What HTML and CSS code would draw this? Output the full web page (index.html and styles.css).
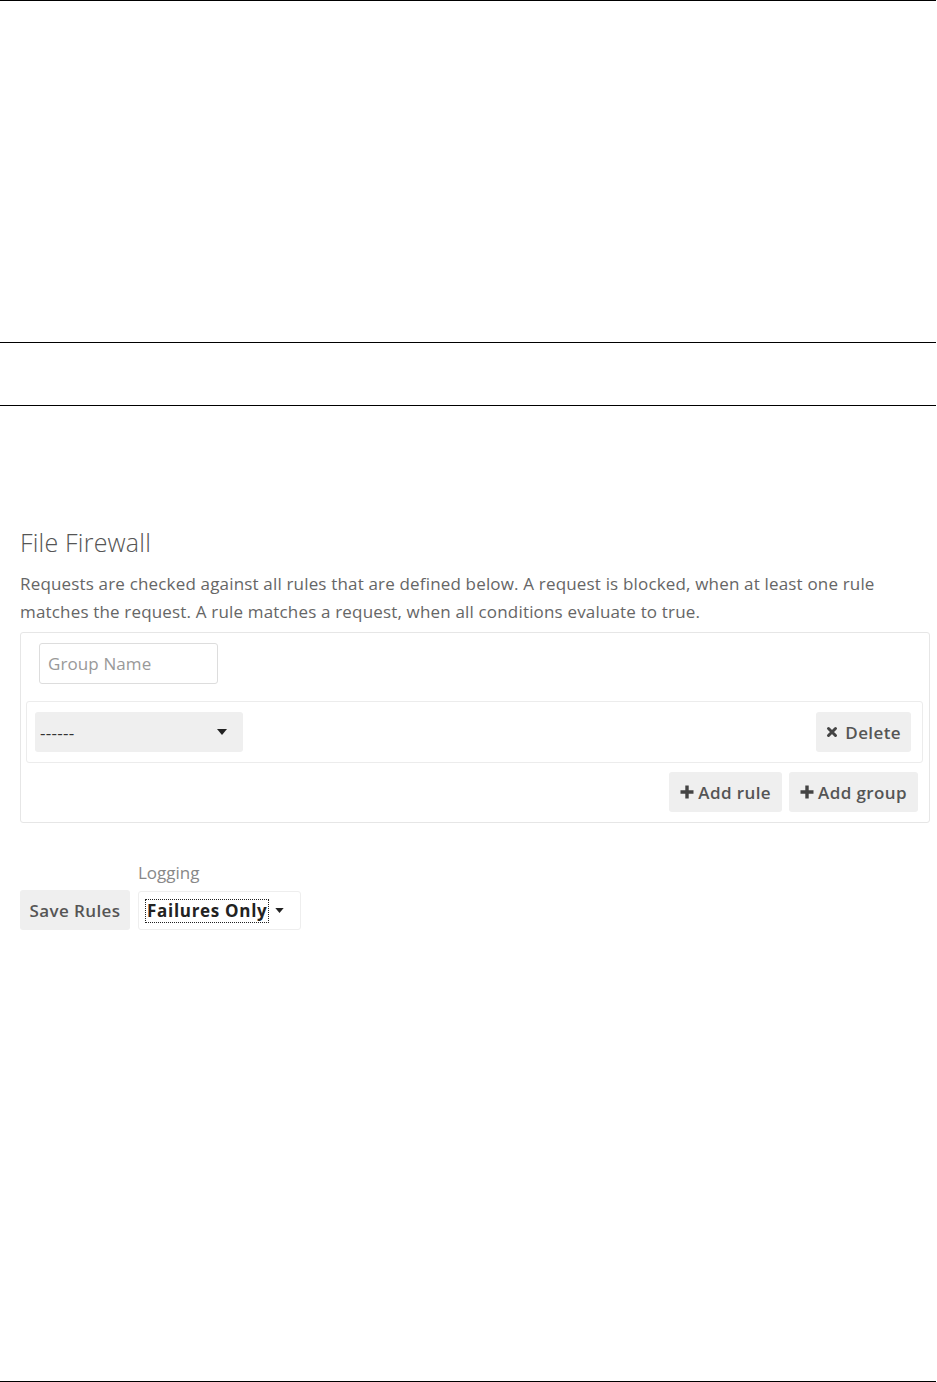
FILE: index.html
```html
<!DOCTYPE html>
<html>
<head>
<meta charset="utf-8">
<link rel="stylesheet" href="styles.css">
</head>
<body>
<div class="frame frame-a"></div>
<div class="frame frame-b"></div>
<div class="frame frame-c">
  <div class="section">
    <h2 class="title">File Firewall</h2>
    <p class="desc">Requests are checked against all rules that are defined below. A request is blocked, when at least one rule matches the request. A rule matches a request, when all conditions evaluate to true.</p>
    <div class="group">
      <input class="group-name" type="text" placeholder="Group Name">
      <div class="rule">
        <div class="select grey">
          <span class="sel-text">------</span>
          <svg class="caret" width="10" height="6" viewBox="0 0 10 6"><path d="M0 0H10L5 6Z" fill="#222"/></svg>
        </div>
        <button class="btn del">
          <svg class="ico" width="12" height="12" viewBox="0 0 12 12"><path d="M2.5 2.5L9.5 9.5M9.5 2.5L2.5 9.5" stroke="#444" stroke-width="3" stroke-linecap="round"/></svg>Delete</button>
      </div>
      <div class="actions">
        <button class="btn">
          <svg class="ico" width="14" height="14" viewBox="0 0 14 14"><path d="M7 0.5V13.5M0.5 7H13.5" stroke="#444" stroke-width="3.4"/></svg>Add rule</button>
        <button class="btn">
          <svg class="ico" width="14" height="14" viewBox="0 0 14 14"><path d="M7 0.5V13.5M0.5 7H13.5" stroke="#444" stroke-width="3.4"/></svg>Add group</button>
      </div>
    </div>
    <div class="footer">
      <button class="btn save">Save Rules</button>
      <div class="logging">
        <label class="log-label">Logging</label>
        <div class="select white">
          <span class="focus-text">Failures Only</span>
          <svg class="caret" width="9" height="5" viewBox="0 0 10 6"><path d="M0 0H10L5 6Z" fill="#222"/></svg>
        </div>
      </div>
    </div>
  </div>
</div>
<div class="frame frame-d"></div>
</body>
</html>
```
FILE: styles.css
```css
html, body {
  margin: 0;
  padding: 0;
  background: #fff;
  font-family: "Open Sans", "Liberation Sans", sans-serif;
  color: #555;
}
.frame {
  width: 936px;
  border-top: 1px solid #000;
  box-sizing: border-box;
}
.frame-a { height: 342px; }
.frame-b { height: 63px; }
.frame-c { height: 976px; }
.frame-d { height: 1px; }
.section {
  padding: 119px 0 0 20px;
}
.title {
  margin: 0;
  font-size: 25px;
  font-weight: 300;
  line-height: 34px;
  letter-spacing: 0.2px;
  color: #555;
}
.desc {
  margin: 11px 0 0;
  width: 900px;
  font-size: 17px;
  line-height: 28px;
  letter-spacing: 0.17px;
  color: #666;
}
.group {
  margin-top: 6px;
  width: 910px;
  box-sizing: border-box;
  border: 1px solid #e6e6e6;
  border-radius: 3px;
  padding: 10px 6px 10px 5px;
}
.group-name {
  display: block;
  margin-left: 13px;
  width: 179px;
  height: 41px;
  box-sizing: border-box;
  border: 1px solid #ddd;
  border-radius: 3px;
  padding: 0 8px;
  font-family: inherit;
  font-size: 17px;
  letter-spacing: 0.1px;
  color: #555;
  outline: none;
}
.group-name::placeholder { color: #999; }
.rule {
  margin-top: 17px;
  display: flex;
  justify-content: space-between;
  align-items: center;
  height: 62px;
  box-sizing: border-box;
  border: 1px solid #ececec;
  border-radius: 3px;
  padding: 0 11px 0 8px;
}
.select {
  display: flex;
  align-items: center;
  justify-content: space-between;
  height: 40px;
  box-sizing: border-box;
  border-radius: 3px;
}
.select.grey {
  width: 208px;
  background: #efefef;
  padding: 0 16px 0 5px;
}
.sel-text {
  font-size: 17px;
  color: #333;
  font-weight: 400;
  letter-spacing: 0.3px;
}
.btn {
  display: inline-flex;
  align-items: center;
  gap: 4px;
  height: 40px;
  padding: 0 11px;
  border: none;
  border-radius: 3px;
  background: #efefef;
  font-family: inherit;
  font-size: 17px;
  font-weight: 600;
  letter-spacing: 0.4px;
  color: #555;
  white-space: nowrap;
}
.btn.del { gap: 7px; padding: 0 10px; }
.actions {
  margin-top: 9px;
  display: flex;
  justify-content: flex-end;
  gap: 7px;
  padding-right: 5px;
}
.footer {
  margin-top: 39px;
  display: flex;
  align-items: flex-end;
  gap: 8px;
}
.save { width: 110px; padding: 0; justify-content: center; }
.logging {
  display: flex;
  flex-direction: column;
}
.log-label {
  font-size: 17px;
  color: #888;
  line-height: 22px;
  margin-bottom: 7px;
}
.select.white {
  width: 163px;
  height: 39px;
  border: 1px solid #eee;
  padding: 0 10px 0 7px;
  justify-content: flex-start;
  gap: 7px;
}
.focus-text {
  font-size: 17px;
  font-weight: 700;
  color: #222;
  outline: 1px dotted #222;
  padding: 0 1px;
  line-height: 22px;
  letter-spacing: 0.7px;
}
.caret { flex: none; }
```
